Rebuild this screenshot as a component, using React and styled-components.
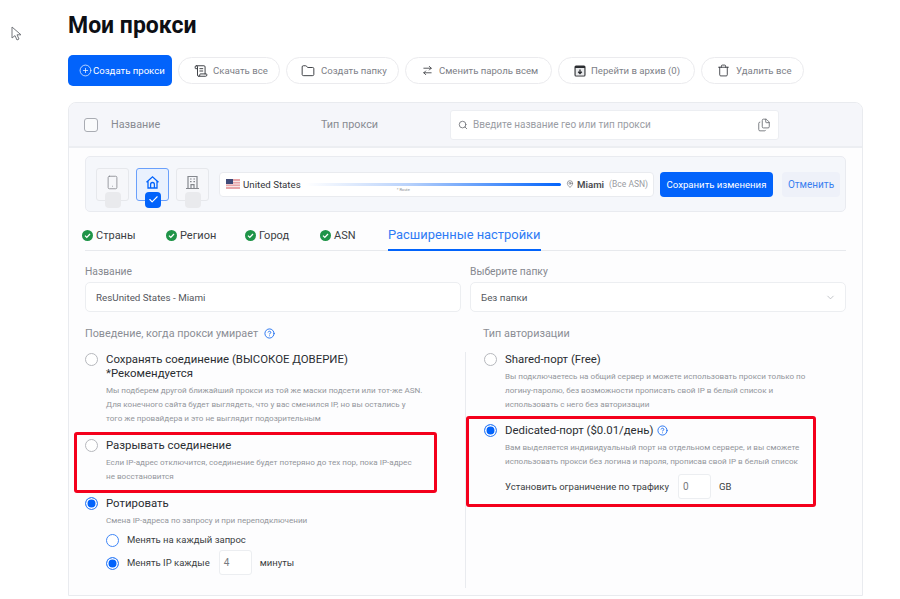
import React from 'react';
import styled, { createGlobalStyle } from 'styled-components';
import {
  CirclePlus, ScrollText, Folder, ArrowRightLeft, Trash, Search, Files,
  Smartphone, Check, MapPin, ChevronDown, CircleHelp,
} from 'lucide-react';

const GlobalStyle = createGlobalStyle`
  html, body {
    margin: 0;
    padding: 0;
    background: #fff;
    font-family: Roboto, "Liberation Sans", sans-serif;
    color: #24272d;
  }
  * { box-sizing: border-box; }
`;

const Page = styled.div`
  position: relative;
  width: 900px;
  height: 599px;
  overflow: hidden;
  padding: 12px 37px 0 68px;
`;

const Cursor = styled.svg`
  position: absolute;
  left: 11px;
  top: 26px;
`;

const Title = styled.h1`
  margin: 0;
  font-size: 23px;
  line-height: 28px;
  font-weight: 700;
  color: #0d0f14;
`;

const Toolbar = styled.div`
  display: flex;
  align-items: center;
  gap: 6px;
  margin-top: 15px;
  height: 31px;
`;

const PrimaryButton = styled.div`
  display: flex;
  align-items: center;
  gap: 1px;
  width: 104px;
  height: 31px;
  padding-left: 11px;
  border-radius: 5px;
  background: #0263fb;
  color: #fff;
  font-size: 9.6px;
`;

const PillButton = styled.div`
  display: flex;
  align-items: center;
  gap: ${p => p.$gap || 5}px;
  width: ${p => p.$w}px;
  height: 27px;
  padding-left: ${p => p.$pl || 15}px;
  border: 1px solid #ebebee;
  border-radius: 14px;
  color: #7d8087;
  font-size: 9.6px;
  svg { color: #34373c; flex: none; }
`;

const ArchiveIcon = () => (
  <svg width="12" height="12" viewBox="0 0 12 12">
    <rect x="0.5" y="0.5" width="11" height="11" rx="1.5" fill="#2b2d31" />
    <rect x="1.6" y="3" width="8.8" height="7.6" fill="#e9eaec" />
    <path d="M6 4.4v4M4.2 6.8L6 8.6l1.8-1.8" stroke="#2b2d31" strokeWidth="1.3" fill="none" />
  </svg>
);

const Card = styled.div`
  margin-top: 16px;
  height: 494px;
  border: 1px solid #e9ebef;
  border-radius: 8px 8px 0 0;
  background: #fdfdfe;
  overflow: hidden;
`;

const CardHeader = styled.div`
  display: flex;
  align-items: center;
  height: 45px;
  padding-left: 15px;
  background: #f5f6fa;
  border-bottom: 2px solid #eceef2;
`;

const HeaderCheck = styled.span`
  width: 14px;
  height: 14px;
  border: 1.5px solid #a9acb3;
  border-radius: 3px;
  background: #fafbfc;
`;

const HeaderLabel = styled.span`
  width: ${p => p.$w}px;
  margin-left: ${p => p.$ml || 0}px;
  font-size: 10.8px;
  color: #888b92;
`;

const SearchBox = styled.div`
  display: flex;
  align-items: center;
  width: 329px;
  height: 30px;
  padding: 0 7px 0 7px;
  background: #fff;
  border: 1px solid #eceef2;
  border-radius: 3px;
  font-size: 10px;
  color: #9a9da4;
  svg { color: #6c6f75; flex: none; }
  span { flex: 1; margin-left: 5px; }
`;

const CardBody = styled.div`
  padding: 8px 16px 0;
`;

const RoutePanel = styled.div`
  display: flex;
  align-items: center;
  height: 56px;
  padding: 0 5px 0 10px;
  background: #f5f7fb;
  border: 1px solid #e9ebf0;
  border-radius: 5px;
`;

const Tile = styled.div`
  position: relative;
  display: flex;
  justify-content: center;
  padding-top: 6px;
  width: 33px;
  height: 33px;
  margin-right: 7px;
  border: 1px solid ${p => p.$active ? '#6aa0fb' : '#e6e8ec'};
  border-radius: 3px;
  background: ${p => p.$active ? '#e9f1fe' : '#f6f7fa'};
  color: ${p => p.$active ? '#0263fb' : '#85888e'};
`;

const TileMark = styled.span`
  position: absolute;
  left: 8px;
  top: 23px;
  display: flex;
  align-items: center;
  justify-content: center;
  width: 16px;
  height: 16px;
  border-radius: 4px;
  color: #fff;
  background: ${p => p.$active ? '#0263fb' : '#e9eaed'};
`;

const HomeIcon = () => (
  <svg width="15" height="15" viewBox="0 0 15 15" fill="none" stroke="currentColor" strokeWidth="1.3">
    <path d="M1.5 7.2L7.5 1.8l6 5.4M3 6v7h9V6" />
    <path d="M5.6 13V9.4a1.9 1.9 0 013.8 0V13" />
  </svg>
);

const OfficeIcon = () => (
  <svg width="15" height="15" viewBox="0 0 15 15" fill="none" stroke="currentColor" strokeWidth="1.2">
    <path d="M3 13.5V1.5h9v12M1 13.5h13" />
    <path d="M5 4h1.6M8.4 4H10M5 6.6h1.6M8.4 6.6H10M6 13.5V9.6h3v3.9" />
  </svg>
);

const RouteBox = styled.div`
  display: flex;
  align-items: center;
  width: 435px;
  height: 25px;
  margin-left: 3px;
  padding: 0 5px 0 6px;
  background: #fff;
  border: 1px solid #e9ebef;
  border-radius: 4px;
  font-size: 9.7px;
  color: #33363b;
`;

const Flag = () => (
  <svg width="14" height="10" viewBox="0 0 14 10">
    <rect width="14" height="10" fill="#e8a5a8" />
    <path d="M0 2.5h14M0 5h14M0 7.5h14" stroke="#f6e6e6" strokeWidth="1" />
    <rect width="7" height="5" fill="#3f4a78" />
  </svg>
);

const CountryName = styled.span`
  margin-left: 3px;
`;

const RouteLine = styled.div`
  position: relative;
  flex: 1;
  height: 3px;
  margin: 0 5px 0 5px;
  background: linear-gradient(90deg, #ffffff, #b9d2fb 40%, #0263fb);
  border-radius: 2px;
`;

const RouteCaption = styled.span`
  position: absolute;
  left: 91px;
  top: 4px;
  font-size: 4px;
  line-height: 5px;
  color: #8a8d93;
`;

const City = styled.b`
  margin-left: 3px;
  font-weight: 600;
  color: #4a4c50;
`;

const AsnNote = styled.span`
  margin-left: 5px;
  font-size: 8.5px;
  color: #9a9ca2;
`;

const SaveButton = styled.div`
  display: flex;
  align-items: center;
  justify-content: center;
  width: 113px;
  height: 25px;
  margin-left: 6px;
  background: #0263fb;
  border-radius: 4px;
  color: #fff;
  font-size: 9.6px;
`;

const CancelButton = styled.div`
  display: flex;
  align-items: center;
  justify-content: center;
  width: 58px;
  height: 25px;
  margin-left: 9px;
  background: #eef1f9;
  border-radius: 4px;
  color: #3a7ff0;
  font-size: 10px;
`;

const Tabs = styled.div`
  display: flex;
  align-items: center;
  height: 39px;
  padding-top: 9px;
  border-bottom: 1px solid #e7e9ed;
`;

const Tab = styled.div`
  display: flex;
  align-items: center;
  gap: 3px;
  width: ${p => p.$w}px;
  margin-left: ${p => p.$ml || 0}px;
  font-size: 11px;
  color: #3b3e43;
`;

const ActiveTab = styled.div`
  margin-left: 1px;
  height: 30px;
  line-height: 28px;
  margin-bottom: -1px;
  border-bottom: 2px solid #0263fb;
  font-size: 12.9px;
  color: #2f7bf5;
`;

const TabCheck = () => (
  <svg width="11" height="11" viewBox="0 0 11 11">
    <circle cx="5.5" cy="5.5" r="5.5" fill="#1f9448" />
    <path d="M3 5.6l1.8 1.8L8 4" stroke="#fff" strokeWidth="1.3" fill="none" />
  </svg>
);

const FieldGrid = styled.div`
  display: grid;
  grid-template-columns: 376px 376px;
  column-gap: 9px;
  margin-top: 15px;
`;

const FieldLabel = styled.div`
  height: 11px;
  line-height: 11px;
  font-size: 10.3px;
  color: #85888f;
`;

const Field = styled.div`
  display: flex;
  align-items: center;
  justify-content: space-between;
  height: 30px;
  margin-top: 5px;
  padding: 0 9px 0 10px;
  background: #fff;
  border: 1px solid #eceef1;
  border-radius: 5px;
  font-size: 9.8px;
  color: #55585e;
  svg { color: #a9acb2; }
`;

const Columns = styled.div`
  display: grid;
  grid-template-columns: 380px 1fr;
  margin-top: 14px;
`;

const RightColumn = styled.div`
  padding-left: 18px;
`;

const SectionTitle = styled.div`
  display: flex;
  align-items: center;
  gap: 6px;
  height: 14px;
  font-size: 10.8px;
  color: #8b8e95;
  svg { color: #1e6ff0; }
`;

const OptionGroup = styled.div`
  margin-top: 12px;
  height: ${p => p.$h ? `${p.$h}px` : 'auto'};
  ${p => p.$divided && 'border-left: 1px solid #e9ebef; margin-left: -18px; padding-left: 18px;'}
`;

const Option = styled.div`
  display: grid;
  grid-template-columns: 21px 1fr;
  margin-top: ${p => p.$mt || 0}px;
`;

const Radio = styled.span`
  display: block;
  flex: none;
  width: 13px;
  height: 13px;
  margin-top: 1px;
  border-radius: 50%;
  border: 1px solid ${p => p.$on || p.$blue ? '#3f86f7' : '#b6b8bd'};
  background: ${p => p.$on ? '#0263fb' : '#fff'};
  box-shadow: ${p => p.$on ? 'inset 0 0 0 1.5px #fff' : 'none'};
`;

const OptionTitle = styled.div`
  display: flex;
  align-items: center;
  gap: 4px;
  font-size: 11.4px;
  line-height: 14px;
  color: #2a2d32;
  svg { color: #1e6ff0; }
`;

const OptionText = styled.div`
  margin-top: 4px;
  font-size: 8.1px;
  line-height: 13.8px;
  color: #93969c;
  white-space: nowrap;
`;

const SubOption = styled.div`
  display: flex;
  align-items: center;
  gap: 8px;
  height: ${p => p.$h}px;
  margin-top: ${p => p.$mt || 0}px;
  font-size: 9.5px;
  color: #3a3d42;
`;

const SmallInput = styled.div`
  display: flex;
  align-items: center;
  width: 33px;
  height: 25px;
  margin: 0 0 0 ${p => p.$ml}px;
  padding-left: 4px;
  background: #fff;
  border: 1px solid #eceef1;
  border-radius: 3px;
  font-size: 10px;
  color: #777a80;
`;

const RedFrame = styled.div`
  position: absolute;
  left: ${p => p.$x}px;
  top: ${p => p.$y}px;
  width: ${p => p.$w}px;
  height: ${p => p.$h}px;
  border: 3px solid #f4001c;
  border-radius: 3px;
  pointer-events: none;
`;

export default function App() {
  return (
    <>
      <GlobalStyle />
      <Page>
        <Cursor width="12" height="16" viewBox="0 0 12 16">
          <path d="M1 1v11l3-2.4 2 4.4 2-1-2-4.2h4z" fill="#fff" stroke="#74777c" strokeWidth="1" />
        </Cursor>
        <Title>Мои прокси</Title>
        <Toolbar>
          <PrimaryButton>
            <CirclePlus size={13} strokeWidth={1.3} />
            Создать прокси
          </PrimaryButton>
          <PillButton $w={102}><ScrollText size={14} strokeWidth={1.6} />Скачать все</PillButton>
          <PillButton $w={113} $pl={14} $gap={6}><Folder size={14} strokeWidth={1.6} />Создать папку</PillButton>
          <PillButton $w={147} $pl={16} $gap={6}><ArrowRightLeft size={11} strokeWidth={1.8} />Сменить пароль всем</PillButton>
          <PillButton $w={137} $pl={15}><ArchiveIcon />Перейти в архив (0)</PillButton>
          <PillButton $w={103} $pl={15} $gap={6}><Trash size={13} strokeWidth={1.6} />Удалить все</PillButton>
        </Toolbar>
        <Card>
          <CardHeader>
            <HeaderCheck />
            <HeaderLabel $w={210} $ml={13}>Название</HeaderLabel>
            <HeaderLabel $w={129}>Тип прокси</HeaderLabel>
            <SearchBox>
              <Search size={10} strokeWidth={2} />
              <span>Введите название гео или тип прокси</span>
              <Files size={14} strokeWidth={1.5} />
            </SearchBox>
          </CardHeader>
          <CardBody>
            <RoutePanel>
              <Tile>
                <Smartphone size={15} strokeWidth={1.3} />
                <TileMark />
              </Tile>
              <Tile $active>
                <HomeIcon />
                <TileMark $active><Check size={11} strokeWidth={2.4} /></TileMark>
              </Tile>
              <Tile>
                <OfficeIcon />
                <TileMark />
              </Tile>
              <RouteBox>
                <Flag />
                <CountryName>United States</CountryName>
                <RouteLine><RouteCaption>* Route</RouteCaption></RouteLine>
                <MapPin size={8} strokeWidth={2} color="#6c6f75" />
                <City>Miami</City>
                <AsnNote>(Все ASN)</AsnNote>
              </RouteBox>
              <SaveButton>Сохранить изменения</SaveButton>
              <CancelButton>Отменить</CancelButton>
            </RoutePanel>
            <Tabs>
              <Tab $w={84} $ml={-3}><TabCheck />Страны</Tab>
              <Tab $w={79}><TabCheck />Регион</Tab>
              <Tab $w={75}><TabCheck />Город</Tab>
              <Tab $w={67}><TabCheck />ASN</Tab>
              <ActiveTab>Расширенные настройки</ActiveTab>
            </Tabs>
            <FieldGrid>
              <div>
                <FieldLabel>Название</FieldLabel>
                <Field>ResUnited States - Miami</Field>
              </div>
              <div>
                <FieldLabel>Выберите папку</FieldLabel>
                <Field>Без папки<ChevronDown size={11} strokeWidth={1.5} /></Field>
              </div>
            </FieldGrid>
            <Columns>
              <div>
                <SectionTitle>Поведение, когда прокси умирает <CircleHelp size={11} strokeWidth={2} /></SectionTitle>
                <OptionGroup>
                  <Option>
                    <Radio />
                    <div>
                      <OptionTitle>Сохранять соединение (ВЫСОКОЕ ДОВЕРИЕ)</OptionTitle>
                      <OptionTitle>*Рекомендуется</OptionTitle>
                      <OptionText>
                        Мы подберем другой ближайший прокси из той же маски подсети или тот-же ASN.<br />
                        Для конечного сайта будет выглядеть, что у вас сменился IP, но вы остались у<br />
                        того же провайдера и это не выглядит подозрительным
                      </OptionText>
                    </div>
                  </Option>
                  <Option $mt={13}>
                    <Radio />
                    <div>
                      <OptionTitle>Разрывать соединение</OptionTitle>
                      <OptionText>
                        Если IP-адрес отключится, соединение будет потеряно до тех пор, пока IP-адрес<br />
                        не восстановится
                      </OptionText>
                    </div>
                  </Option>
                  <Option $mt={12}>
                    <Radio $on />
                    <div>
                      <OptionTitle>Ротировать</OptionTitle>
                      <OptionText>Смена IP-адреса по запросу и при переподключении</OptionText>
                      <SubOption $h={22} $mt={1}><Radio $blue />Менять на каждый запрос</SubOption>
                      <SubOption $h={24}>
                        <Radio $on />Менять IP каждые
                        <SmallInput $ml={1}>4</SmallInput>минуты
                      </SubOption>
                    </div>
                  </Option>
                </OptionGroup>
              </div>
              <RightColumn>
                <SectionTitle>Тип авторизации</SectionTitle>
                <OptionGroup $h={236} $divided>
                  <Option>
                    <Radio />
                    <div>
                      <OptionTitle>Shared-порт (Free)</OptionTitle>
                      <OptionText>
                        Вы подключаетесь на общий сервер и можете использовать прокси только по<br />
                        логину-паролю, без возможности прописать свой IP в белый список и<br />
                        использовать с него без авторизации
                      </OptionText>
                    </div>
                  </Option>
                  <Option $mt={12}>
                    <Radio $on />
                    <div>
                      <OptionTitle>Dedicated-порт ($0.01/день) <CircleHelp size={11} strokeWidth={2} /></OptionTitle>
                      <OptionText>
                        Вам выделяется индивидуальный порт на отдельном сервере, и вы сможете<br />
                        использовать прокси без логина и пароля, прописав свой IP в белый список
                      </OptionText>
                      <SubOption $h={25} $mt={5}>
                        Установить ограничение по трафику
                        <SmallInput $ml={1}>0</SmallInput>GB
                      </SubOption>
                    </div>
                  </Option>
                </OptionGroup>
              </RightColumn>
            </Columns>
          </CardBody>
        </Card>
        <RedFrame $x={74} $y={432} $w={363} $h={61} />
        <RedFrame $x={466} $y={416} $w={350} $h={91} />
      </Page>
    </>
  );
}
